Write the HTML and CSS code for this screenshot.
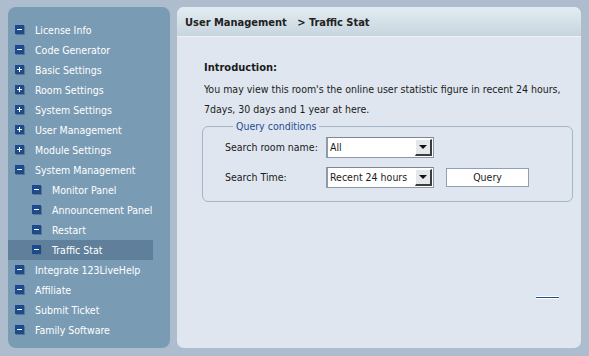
FILE: index.html
```html
<!DOCTYPE html>
<html>
<head>
<meta charset="utf-8">
<link rel="stylesheet" href="styles.css">
</head>
<body>
<div class="page">
  <nav class="side">
    <ul class="menu">
      <li class="item"><span class="ico minus"></span>License Info</li>
      <li class="item"><span class="ico minus"></span>Code Generator</li>
      <li class="item"><span class="ico plus"></span>Basic Settings</li>
      <li class="item"><span class="ico plus"></span>Room Settings</li>
      <li class="item"><span class="ico plus"></span>System Settings</li>
      <li class="item"><span class="ico plus"></span>User Management</li>
      <li class="item"><span class="ico plus"></span>Module Settings</li>
      <li class="item"><span class="ico minus"></span>System Management</li>
      <li class="item sub"><span class="ico minus"></span>Monitor Panel</li>
      <li class="item sub"><span class="ico minus"></span>Announcement Panel</li>
      <li class="item sub"><span class="ico minus"></span>Restart</li>
      <li class="item sub active"><span class="ico minus"></span>Traffic Stat</li>
      <li class="item"><span class="ico minus"></span>Integrate 123LiveHelp</li>
      <li class="item"><span class="ico minus"></span>Affiliate</li>
      <li class="item"><span class="ico minus"></span>Submit Ticket</li>
      <li class="item"><span class="ico minus"></span>Family Software</li>
    </ul>
  </nav>
  <main class="main">
    <div class="head">User Management &nbsp;&nbsp;&gt; Traffic Stat</div>
    <div class="body">
      <h3 class="intro-title">Introduction:</h3>
      <p class="intro">You may view this room's the online user statistic figure in recent 24 hours,<br>7days, 30 days and 1 year at here.</p>
      <fieldset class="query">
        <legend>Query conditions</legend>
        <div class="row">
          <label class="lbl">Search room name:</label>
          <div class="select"><span class="val">All</span><span class="arrow"></span></div>
        </div>
        <div class="row">
          <label class="lbl">Search Time:</label>
          <div class="select"><span class="val">Recent 24 hours</span><span class="arrow"></span></div>
          <button class="btn">Query</button>
        </div>
      </fieldset>
      <div class="rule-wrap"><span class="rule"></span></div>
    </div>
  </main>
</div>
</body>
</html>
```
FILE: styles.css
```css
html, body {
  margin: 0;
  padding: 0;
}
body {
  background: #adbdce;
  font-family: "DejaVu Sans Condensed", "DejaVu Sans", sans-serif;
  font-stretch: condensed;
  font-size: 10.5px;
  color: #1b1b1b;
  width: 589px;
  height: 356px;
  overflow: hidden;
}
.page {
  display: flex;
  gap: 7px;
  padding: 7px 8px 8px 8px;
  height: 341px;
}
.side {
  width: 162px;
  flex: none;
  background: #7a9bb4;
  border-radius: 8px;
  padding-top: 13px;
  box-sizing: border-box;
}
.menu {
  list-style: none;
  margin: 0;
  padding: 0;
}
.item {
  height: 20px;
  display: flex;
  align-items: center;
  color: #ffffff;
  padding-left: 7px;
  width: 145px;
  box-sizing: border-box;
  white-space: nowrap;
  font-size: 10.5px;
}
.item.sub {
  padding-left: 24px;
}
.item.active {
  background: #5f7f9a;
}
.ico {
  width: 9px;
  height: 9px;
  background: #1d4a8c;
  position: relative;
  margin-right: 11px;
  box-shadow: 1px 1px 0 #5b7690;
  flex: none;
  margin-top: -1px;
}
.ico::before {
  content: "";
  position: absolute;
  left: 2px;
  top: 4px;
  width: 5px;
  height: 1px;
  background: #fff;
}
.plus::after {
  content: "";
  position: absolute;
  left: 4px;
  top: 2px;
  width: 1px;
  height: 5px;
  background: #fff;
}
.main {
  flex: 1;
  background: #dfe6ef;
  border-radius: 7px;
  overflow: hidden;
  display: flex;
  flex-direction: column;
}
.head {
  height: 30px;
  box-sizing: border-box;
  background: linear-gradient(#e3ecf2, #c7d5de);
  border-bottom: 1px dotted #f2f6f9;
  font-weight: bold;
  font-size: 11px;
  color: #222;
  padding: 9px 0 0 8px;
}
.body {
  padding: 24px 8px 0 27px;
  flex: 1;
}
.intro-title {
  margin: 0;
  font-size: 11px;
  font-weight: bold;
  line-height: 14px;
}
.intro {
  margin: 4px 0 0 0;
  line-height: 20px;
  white-space: nowrap;
}
.query {
  margin: 1px 0 0 -2px;
  border: 1px solid #a3b6ca;
  border-radius: 6px;
  padding: 4px 0 13px 22px;
  width: 347px;
}
.query legend {
  color: #1d4e93;
  padding: 0 3px;
  margin-left: 8px;
}
.row {
  display: flex;
  align-items: center;
  height: 22px;
  margin-top: 8px;
}
.row:first-of-type {
  margin-top: 0;
}
.lbl {
  width: 101px;
  white-space: nowrap;
}
.select {
  width: 108px;
  height: 21px;
  box-sizing: border-box;
  background: #fff;
  border: 1px solid #8b98a6;
  border-top-color: #7b8794;
  border-left: 2px solid #8e9aa8;
  display: flex;
  align-items: center;
  position: relative;
  white-space: nowrap;
}
.val {
  padding-left: 2px;
  flex: 1;
  overflow: hidden;
}
.arrow {
  width: 17px;
  height: 17px;
  box-sizing: border-box;
  background: #e4e8ed;
  border-right: 2px solid #3c3c3c;
  border-bottom: 2px solid #3c3c3c;
  border-top: 1px solid #fff;
  border-left: 1px solid #fff;
  margin-right: 1px;
  position: relative;
  flex: none;
}
.arrow::after {
  content: "";
  position: absolute;
  left: 3px;
  top: 5px;
  border-left: 4px solid transparent;
  border-right: 4px solid transparent;
  border-top: 4px solid #111;
}
.btn {
  margin-left: 12px;
  width: 83px;
  height: 19px;
  background: #fff;
  border: 1px solid #8fa0b2;
  font-family: inherit;
  font-stretch: condensed;
  font-size: 10.5px;
  color: #222;
  padding: 0;
}
.rule-wrap {
  display: flex;
  justify-content: flex-end;
  padding: 94px 14px 0 0;
}
.rule {
  display: block;
  width: 23px;
  height: 1px;
  background: #1f4f8f;
  border-top: 1px solid #fff;
  border-bottom: 1px solid #fff;
}
```
